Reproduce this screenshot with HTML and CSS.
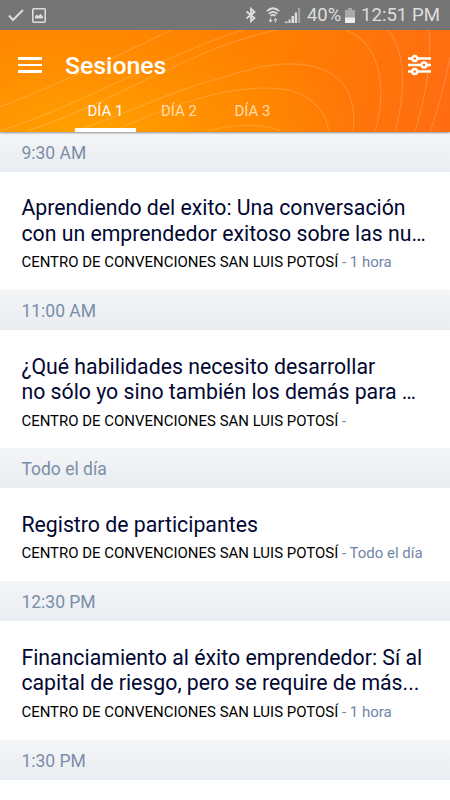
FILE: index.html
```html
<!DOCTYPE html>
<html lang="es">

<head>
   <meta charset="UTF-8">
   <meta name="viewport" content="width=device-width, initial-scale=1.0">
   <title>Sesiones</title>
   <link rel="stylesheet" href="styles.css">
</head>

<body>
   <div class="status">
      <svg class="status__icon status__icon--check" width="16" height="14" viewBox="0 0 16 14">
         <path d="M1 7.5 5 12 15 2" fill="none" stroke="#dedede" stroke-width="1.9" />
      </svg>
      <svg class="status__icon status__icon--image" width="14" height="15" viewBox="0 0 14 15">
         <rect x="0.8" y="0.8" width="12.4" height="13.4" rx="1" fill="none" stroke="#dedede" stroke-width="1.6" />
         <path d="M3 10.5V8.5L5 6.5 6.5 8 8.5 5.7 11 8.5V10.5Z" fill="#dedede" />
      </svg>
      <svg class="status__icon status__icon--bluetooth" width="12" height="16" viewBox="0 0 12 16">
         <path d="M1.5 4.5 9.5 11 6 14.2V1.8L9.5 5 1.5 11.5" fill="none" stroke="#dedede" stroke-width="1.8" />
      </svg>
      <svg class="status__icon status__icon--wifi" width="14" height="16" viewBox="0 0 14 16">
         <path d="M.8 4.2Q7-1.7 13.2 4.2M2.8 6.8Q7 2.8 11.2 6.8M4.7 9Q7 6.9 9.3 9" fill="none" stroke="#dedede" stroke-width="1.7" />
         <path d="M2.5 13h4L4.5 15.5ZM4 11h1v3H4ZM7.5 13.5h4L9.5 11ZM9 13h1v2.5H9Z" fill="#dedede" />
      </svg>
      <svg class="status__icon status__icon--signal" width="16" height="15" viewBox="0 0 16 15">
         <path d="M0 13.5h2.5V15H0ZM3.5 11.5h2V15h-2ZM6.5 8H9v7H6.500ZM9.8 4.500H12V15H9.800Z" fill="#dedede" />
         <path d="M12.9 0h2.3v15h-2.3Z" fill="#a3a3a3" />
      </svg>
      <span class="status__percent">40%</span>
      <svg class="status__icon status__icon--battery" width="10" height="15" viewBox="0 0 10 15">
         <path d="M3 0h4v2h3v8H0V2h3Z" fill="#a9a9a9" />
         <path d="M0 9.5h10V15H0Z" fill="#ececec" />
      </svg>
      <span class="status__time">12:51 PM</span>
   </div>

   <header class="header">
      <svg class="header__lines" width="450" height="101" viewBox="0 0 450 101">
         <path d="M0 77C60 54 110 29 172 0" />
         <path d="M0 101C80 75 145 35 225 6L244 0" />
         <path d="M25 102C100 77 160 39 225 15C255 5 280-3 300-2" />
         <path d="M71 102C135 82 170 60 225 47" />
         <path d="M225 47C268 32 303 30 327 41C351 54 356 78 353 102" />
         <path d="M112 102C150 84 188 70 225 62" />
         <path d="M225 62C265 55 293 57 309 69C321 78 327 88 329 102" />
         <path d="M205 102C230 94 262 92 283 102" />
         <path d="M346 0C382 15 387 60 375 102" />
         <path d="M388 0C407 23 405 65 395 102" />
         <path d="M429 0C432 38 425 66 415 102" />
         <path d="M450 27C444 56 438 80 430 102" />
      </svg>
      <div class="header__bar">
         <button class="header__button burger" type="button" aria-label="Menú">
            <span class="burger__line"></span>
            <span class="burger__line"></span>
            <span class="burger__line"></span>
         </button>
         <h1 class="header__title">Sesiones</h1>
         <button class="header__button header__button--filter" type="button" aria-label="Filtros">
            <svg class="filter" width="24" height="22" viewBox="0 0 24 22">
               <path d="M0 4.5h4M9.5 4.5H23M0 11h13M19 11h4M0 17.5h4M9.5 17.5H23" />
               <circle cx="6.7" cy="4.5" r="2.5" />
               <circle cx="16" cy="11" r="2.5" />
               <circle cx="6.7" cy="17.5" r="2.5" />
            </svg>
         </button>
      </div>
      <nav class="tabs">
         <a href="#" class="tabs__link tabs__link--active">DÍA 1</a>
         <a href="#" class="tabs__link">DÍA 2</a>
         <a href="#" class="tabs__link">DÍA 3</a>
      </nav>
   </header>

   <main class="sessions">
      <h2 class="sessions__time">9:30 AM</h2>
      <article class="session">
         <h3 class="session__title">Aprendiendo del exito: Una conversación<br>con un emprendedor exitoso sobre las nu…</h3>
         <p class="session__meta"><span class="session__place">CENTRO DE CONVENCIONES SAN LUIS POTOSÍ</span> - 1 hora</p>
      </article>

      <h2 class="sessions__time">11:00 AM</h2>
      <article class="session">
         <h3 class="session__title">¿Qué habilidades necesito desarrollar<br>no sólo yo sino también los demás para …</h3>
         <p class="session__meta"><span class="session__place">CENTRO DE CONVENCIONES SAN LUIS POTOSÍ</span> -</p>
      </article>

      <h2 class="sessions__time">Todo el día</h2>
      <article class="session">
         <h3 class="session__title">Registro de participantes</h3>
         <p class="session__meta"><span class="session__place">CENTRO DE CONVENCIONES SAN LUIS POTOSÍ</span> - Todo el día</p>
      </article>

      <h2 class="sessions__time">12:30 PM</h2>
      <article class="session">
         <h3 class="session__title">Financiamiento al éxito emprendedor: Sí al<br>capital de riesgo, pero se require de más...</h3>
         <p class="session__meta"><span class="session__place">CENTRO DE CONVENCIONES SAN LUIS POTOSÍ</span> - 1 hora</p>
      </article>

      <h2 class="sessions__time">1:30 PM</h2>
   </main>
</body>

</html>
```
FILE: styles.css
```css
*,
*::before,
*::after {
   box-sizing: border-box;
}

body {
   margin: 0;
   height: 800px;
   overflow: hidden;
   font-family: Roboto, sans-serif;
   background-color: #fff;
}

h1,
h2,
h3,
p {
   margin: 0;
   font-weight: 400;
}

.status {
   display: flex;
   align-items: center;
   height: 30px;
   padding: 0 10px 0 8px;
   background-color: #757575;
   color: #dedede;
   font-size: 18.6px;
   line-height: 32px;
   white-space: nowrap;
}

.status__icon {
   flex: none;
}

.status__icon--image {
   margin-left: 8px;
}

.status__icon--bluetooth {
   margin-left: auto;
}

.status__icon--wifi {
   margin-left: 9px;
}

.status__icon--signal {
   margin-left: 5px;
}

.status__percent {
   width: 35px;
   margin-left: 6px;
   font-size: 18.4px;
}

.status__icon--battery {
   margin-left: 3px;
}

.status__time {
   width: 79px;
   margin-left: 6px;
}

.header {
   position: relative;
   height: 101.5px;
   background:
      radial-gradient(ellipse 270px 130px at 85px 108px, #ffa200 0%, rgba(255, 155, 0, 0.6) 45%, rgba(255, 130, 0, 0) 100%),
      linear-gradient(100deg, #ff8400 0%, #ff7e00 60%, #ff6c12 100%);
   box-shadow: 0 1px 2px rgba(0, 0, 0, 0.4);
   color: #fff;
}

/* контурные линии на фоне шапки */
.header__lines {
   position: absolute;
   top: 0;
   left: 0;
   fill: none;
   stroke: #fff;
   stroke-width: 1.2;
   opacity: 0.17;
}

.header__bar {
   position: relative;
   display: flex;
   align-items: center;
   height: 70px;
   padding: 0 18px;
}

.header__button {
   padding: 0;
   border: none;
   background-color: transparent;
}

.header__button--filter {
   height: 22px;
   margin-left: auto;
}

.burger {
   display: flex;
   flex-direction: column;
   gap: 4px;
   width: 24px;
}

.burger__line {
   height: 2.5px;
   background-color: #fff;
}

.header__title {
   margin-left: 23px;
   padding-top: 2px;
   font-size: 24.8px;
   font-weight: 500;
   line-height: 30px;
}

.filter {
   display: block;
   fill: none;
   stroke: #fff;
   stroke-width: 2.4;
}

.tabs {
   position: relative;
   display: flex;
   gap: 12.5px;
   padding-left: 75px;
}

.tabs__link {
   width: 61px;
   height: 31.5px;
   border-bottom: 4px solid transparent;
   color: rgba(255, 255, 255, 0.7);
   font-size: 15px;
   line-height: 23px;
   text-align: center;
   text-decoration: none;
}

.tabs__link--active {
   border-color: #fff;
   color: #fff;
}

.sessions__time {
   height: 40px;
   padding-left: 21.4px;
   background: linear-gradient(#f4f5f7, #e9edf1);
   color: #7a8ea9;
   font-size: 17.5px;
   line-height: 43px;
}

.session {
   padding: 23.7px 0 17.7px 21.4px;
   white-space: nowrap;
}

.session__title {
   color: #020833;
   font-size: 21.27px;
   line-height: 25.5px;
}

.session__meta {
   margin-top: 6px;
   color: #6f86a6;
   font-size: 14.97px;
   line-height: 20px;
}

.session__place {
   color: #000;
}
```
